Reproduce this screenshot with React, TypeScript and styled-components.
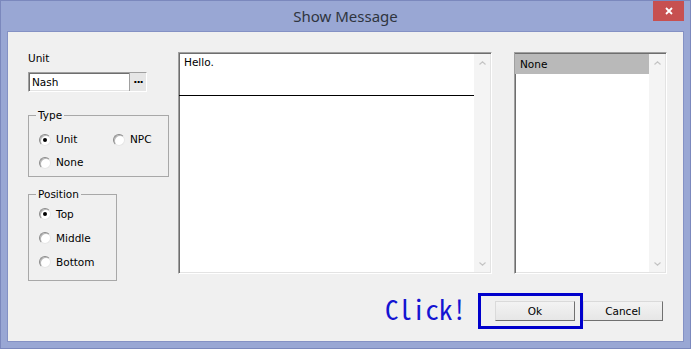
import React from "react";
import styled, { createGlobalStyle, css } from "styled-components";

const GlobalStyle = createGlobalStyle`
  html, body { margin: 0; padding: 0; background: #99a7d4; }
  * { box-sizing: border-box; }
`;

const sunken = css`
  border-style: solid;
  border-width: 1px;
  border-color: #a0a0a0 #ffffff #ffffff #a0a0a0;
  box-shadow: inset 1px 1px 0 #6e6e6e, inset -1px -1px 0 #e3e3e3;
  background: #ffffff;
`;

const Window = styled.div`
  width: 691px;
  height: 349px;
  background: #99a7d4;
  border: 1px solid #7b88bd;
  display: flex;
  flex-direction: column;
  font-family: "DejaVu Sans", sans-serif;
  font-size: 10.5px;
  color: #000;
`;

const TitleBar = styled.div`
  height: 30px;
  display: grid;
  grid-template-columns: 1fr auto 1fr;
  align-items: start;
`;

const Title = styled.div`
  grid-column: 2;
  font-family: "Noto Sans", sans-serif;
  font-size: 15px;
  line-height: 30px;
  color: #2f3540;
`;

const CloseButton = styled.div`
  grid-column: 3;
  justify-self: end;
  width: 31px;
  height: 20px;
  margin-right: 6px;
  background: #c75050;
  display: flex;
  align-items: center;
  justify-content: center;
`;

const Client = styled.div`
  flex: 1;
  margin: 0 6px 6px 6px;
  background: #f0f0f0;
  border: 1px solid #8491c4;
  padding: 20px 16px 0 20px;
  display: flex;
  flex-direction: column;
`;

const TopRow = styled.div`
  display: flex;
  align-items: flex-start;
  & > * {
    flex-shrink: 0;
  }
`;

const LeftCol = styled.div`
  width: 141px;
  margin-right: 9px;
  display: flex;
  flex-direction: column;
  align-items: flex-start;
`;

const FieldLabel = styled.div`
  line-height: 13px;
  margin-bottom: 7px;
`;

const InputBox = styled.div`
  ${sunken};
  width: 119px;
  height: 20px;
  display: flex;
  align-items: stretch;
`;

const InputText = styled.div`
  flex: 1;
  padding-left: 3px;
  line-height: 18px;
`;

const BrowseButton = styled.div`
  width: 17px;
  border-left: 1px solid #a0a0a0;
  background: #e6e6e6;
  font-weight: bold;
  font-size: 11px;
  line-height: 14px;
  text-align: center;
  letter-spacing: -1px;
`;

const GroupBox = styled.div<{ $width: number; $mt: number; $pad: string }>`
  position: relative;
  width: ${(p) => p.$width}px;
  margin-top: ${(p) => p.$mt}px;
  padding: ${(p) => p.$pad};
  border: 1px solid #a8a8a8;
`;

const Legend = styled.span`
  position: absolute;
  top: -7px;
  left: 7px;
  padding: 0 2px;
  background: #f0f0f0;
  line-height: 13px;
`;

const RadioGrid = styled.div<{ $cols: string; $row: number }>`
  display: grid;
  grid-template-columns: ${(p) => p.$cols};
  grid-auto-rows: ${(p) => p.$row}px;
  align-items: center;
`;

const RadioItem = styled.div`
  display: flex;
  align-items: center;
  gap: 5px;
  line-height: 13px;
`;

const RadioCircle = styled.span<{ $checked?: boolean }>`
  width: 12px;
  height: 12px;
  border-radius: 50%;
  border: 1px solid;
  border-color: #8a8a8a #e6e6e6 #e6e6e6 #8a8a8a;
  background: #fff;
  box-shadow: inset 1px 1px 0 #b8b8b8;
  display: flex;
  align-items: center;
  justify-content: center;
  &::after {
    content: "";
    width: 4px;
    height: 4px;
    border-radius: 50%;
    background: ${(p) => (p.$checked ? "#000" : "transparent")};
  }
`;

const Panel = styled.div<{ $width: number; $ml?: number }>`
  ${sunken};
  width: ${(p) => p.$width}px;
  margin-left: ${(p) => p.$ml ?? 0}px;
  height: 222px;
  display: flex;
`;

const PanelBody = styled.div`
  flex: 1;
  display: flex;
  flex-direction: column;
  padding-top: 1px;
`;

const Editor = styled.div`
  height: 42px;
  border-bottom: 1px solid #000;
  padding: 2px 5px;
  line-height: 13px;
`;

const ListRow = styled.div<{ $selected?: boolean }>`
  height: 20px;
  line-height: 20px;
  padding-left: 5px;
  background: ${(p) => (p.$selected ? "#b9b9b9" : "transparent")};
`;

const ScrollTrack = styled.div`
  width: 16px;
  margin: 1px 1px 1px 0;
  background: #f4f4f4;
  display: flex;
  flex-direction: column;
  justify-content: space-between;
  align-items: center;
  padding: 7px 0 6px;
`;

const BottomRow = styled.div`
  display: flex;
  justify-content: flex-end;
  align-items: flex-start;
  margin-top: 20px;
  padding-right: 4px;
`;

const ClickNote = styled.div`
  font-family: "Noto Sans CJK JP", sans-serif;
  font-feature-settings: "hwid";
  font-size: 27px;
  line-height: 16px;
  color: #1414d2;
  margin-right: 29px;
`;

const ButtonWrap = styled.div`
  position: relative;
  margin-right: 8px;
`;

const Highlight = styled.div`
  position: absolute;
  top: -8px;
  bottom: -8px;
  left: -17px;
  right: -8px;
  border: 3px solid #0000cc;
  pointer-events: none;
`;

const Button = styled.div`
  width: 80px;
  height: 20px;
  border: 1px solid;
  border-color: #dadada #707070 #707070 #dadada;
  background: linear-gradient(#f3f3f3, #e6e6e6);
  text-align: center;
  line-height: 18px;
`;

const Chevron = ({ up }: { up?: boolean }) => (
  <svg width="7" height="4" viewBox="0 0 7 4">
    <path
      d={up ? "M0.5 3.5 L3.5 0.8 L6.5 3.5" : "M0.5 0.5 L3.5 3.2 L6.5 0.5"}
      fill="none"
      stroke="#c4c4c4"
      strokeWidth="1.2"
    />
  </svg>
);

const Radio = ({ label, checked }: { label: string; checked?: boolean }) => (
  <RadioItem>
    <RadioCircle $checked={checked} />
    <span>{label}</span>
  </RadioItem>
);

export default function App() {
  return (
    <>
      <GlobalStyle />
      <Window>
        <TitleBar>
          <Title>Show Message</Title>
          <CloseButton>
            <svg width="8" height="8" viewBox="0 0 8 8">
              <path d="M1 1 L7 7 M7 1 L1 7" stroke="#fff" strokeWidth="1.8" />
            </svg>
          </CloseButton>
        </TitleBar>
        <Client>
          <TopRow>
            <LeftCol>
              <FieldLabel>Unit</FieldLabel>
              <InputBox>
                <InputText>Nash</InputText>
                <BrowseButton>...</BrowseButton>
              </InputBox>
              <GroupBox $width={141} $mt={23} $pad="12px 0 2px 10px">
                <Legend>Type</Legend>
                <RadioGrid $cols="74px auto" $row={23}>
                  <Radio label="Unit" checked />
                  <Radio label="NPC" />
                  <Radio label="None" />
                </RadioGrid>
              </GroupBox>
              <GroupBox $width={89} $mt={17} $pad="7px 0 6px 10px">
                <Legend>Position</Legend>
                <RadioGrid $cols="auto" $row={24}>
                  <Radio label="Top" checked />
                  <Radio label="Middle" />
                  <Radio label="Bottom" />
                </RadioGrid>
              </GroupBox>
            </LeftCol>
            <Panel $width={314}>
              <PanelBody>
                <Editor>Hello.</Editor>
              </PanelBody>
              <ScrollTrack>
                <Chevron up />
                <Chevron />
              </ScrollTrack>
            </Panel>
            <Panel $width={153} $ml={22}>
              <PanelBody>
                <ListRow $selected>None</ListRow>
              </PanelBody>
              <ScrollTrack>
                <Chevron up />
                <Chevron />
              </ScrollTrack>
            </Panel>
          </TopRow>
          <BottomRow>
            <ClickNote>Click!</ClickNote>
            <ButtonWrap>
              <Button>Ok</Button>
              <Highlight />
            </ButtonWrap>
            <Button>Cancel</Button>
          </BottomRow>
        </Client>
      </Window>
    </>
  );
}
